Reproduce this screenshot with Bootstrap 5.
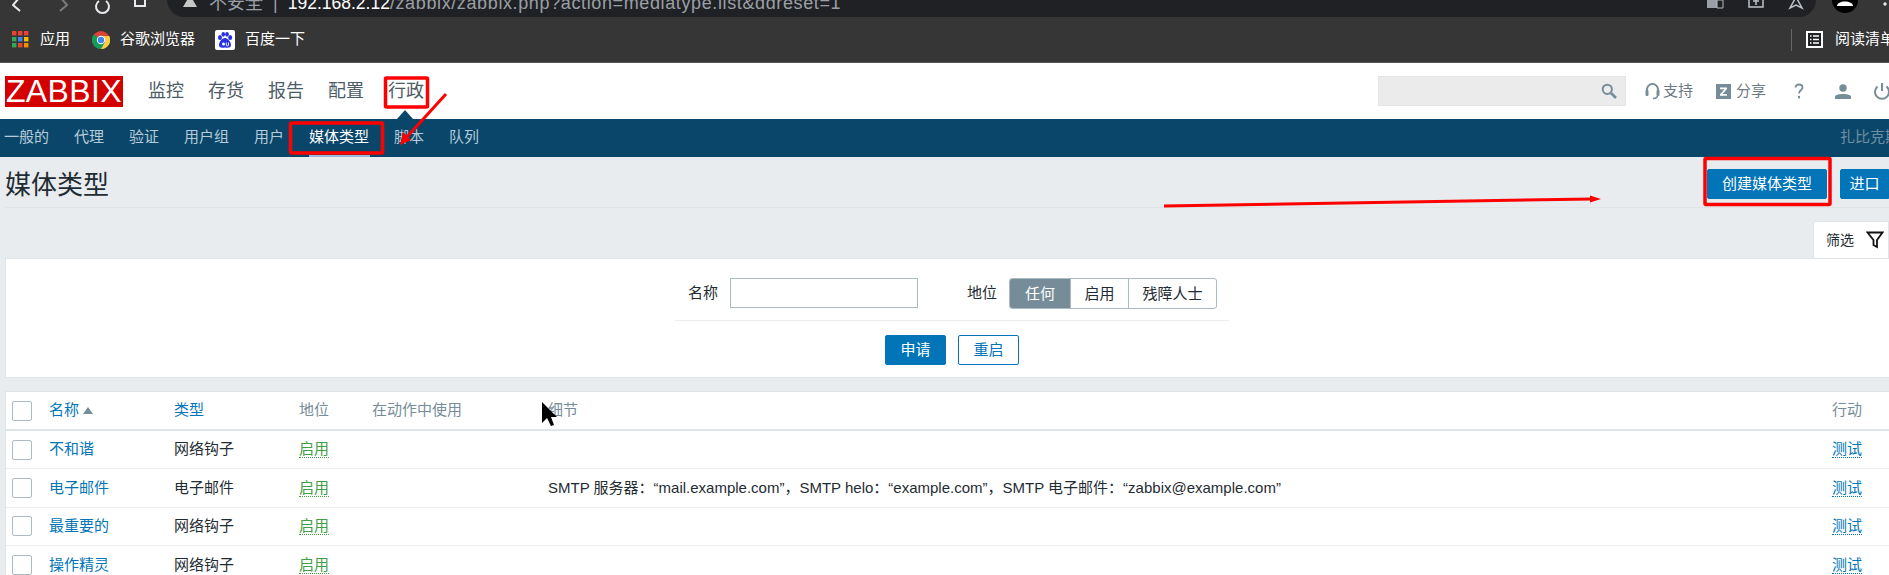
<!DOCTYPE html>
<html lang="zh">
<head>
<meta charset="utf-8">
<title>媒体类型</title>
<link href="https://cdn.jsdelivr.net/npm/bootstrap@5.3.0/dist/css/bootstrap.min.css" rel="stylesheet">
<style>
html,body{margin:0;background:#e9ecef;overflow:hidden}
body{width:1889px;height:575px;position:relative;font-family:"Liberation Sans","Noto Sans CJK SC",sans-serif;font-size:15px;color:#1f2c33}
a{text-decoration:none}
.fx0{flex:none}
.chrome-top{height:17px;background:#363636;overflow:hidden}
.chrome-btns{width:167px;flex:none;padding-left:12px}
.chrome-btns svg{display:block;flex:none}
.addr{width:1649px;flex:none;height:17px;background:#202124;border-radius:0 0 17px 17px;padding-left:16px;overflow:hidden;color:#9aa0a6;font-size:18px;line-height:6px;white-space:nowrap}
.addr b{font-weight:400;color:#fff;font-size:17.5px;letter-spacing:0}
.addr-path{letter-spacing:.62px}
.addr-sep{margin:0 10px}
.addr-icons{margin-right:10px}
.chrome-right{flex:1}
.bookmarks{height:46px;background:#363636;color:#fff;font-size:15px;padding-left:12px;border-bottom:1px solid #555}
.ic-apps{margin-right:11px}
.ic-chrome,.ic-baidu{margin-right:10px}
.bm-a{margin-right:22px}
.bm-b,.bm-c{margin-right:20px}
.readlist{margin-left:auto;border-left:1px solid #666;height:22px;padding-left:14px;white-space:nowrap;width:98px;overflow:hidden}
.ic-read{margin-right:12px}
.zb-head{height:56px;background:#fff;padding-left:5px}
.zb-logo{width:118px;height:31px;background:#d40000;color:#fff;font-size:32px;line-height:31px;text-align:center;letter-spacing:.4px;margin-right:13px}
.zb-menu a{color:#4c5c66;font-size:18px;padding:0 12px;display:block}
.zb-search{width:248px;height:30px;background:#ebebeb;border:1px solid #e3e5e6;margin-left:auto}
.zb-tool{color:#6b7a83;font-size:15px;margin-left:19px;width:244px;overflow:hidden;white-space:nowrap}
.zb-tool span{flex:none}
.t-support{margin-left:3px}
.t-z{margin-left:23px}
.t-share{margin-left:5px}
.t-help{margin-left:28px}
.t-user{margin-left:31px}
.t-power{margin-left:22px}
.sub{height:38px;background:#0a466a;color:#a7c0cf;padding-left:4px;white-space:nowrap}
.sub a{color:#b5cbd8;padding:0 12.5px;line-height:36px;display:block;position:relative}
.sub a:first-child{padding-left:0}
.sub a.on{color:#fff}
.sub a.on::after{content:"";position:absolute;left:12px;right:12px;bottom:0;height:2px;background:#9ab6d8}
.sub-right{margin-left:auto;color:#6e8ea1;width:49px;overflow:hidden;line-height:36px;white-space:nowrap}
.page-head{height:51px;margin-left:5px;padding-top:4px;border-bottom:1px solid #dfe4e7}
.page-title{font-size:26px;line-height:1;font-weight:400;margin:2px 0 0;color:#1f2c33}
.zb-btn{background:#0275b8;border:1px solid #0275b8;color:#fff;font-size:15px;height:30px;line-height:28px;padding:0;border-radius:2px;text-align:center}
.btn-create{width:120px;margin-right:13px}
.btn-import{width:49px;border-radius:2px 0 0 2px}
.tab-row{height:50px;padding-top:13px}
.ftab{width:76px;height:37px;background:#fff;border:1px solid #dfe4e7;border-bottom:0;margin-left:auto;padding-left:12px;font-size:14px;gap:12px}
.fbox{height:120px;margin-left:5px;background:#fff;border:1px solid #dfe4e7;border-right:0}
.frow{height:62px;padding-top:19px;width:554px;margin-left:669px;border-bottom:1px solid #ebeef0;padding-left:13px}
.ftxt{width:30px;margin-right:12px;line-height:30px}
.finput{width:188px;height:30px;border:1px solid #acbbc2;margin-right:49px;background:#fff}
.seg{height:31px;border:1px solid #acbbc2;border-radius:3px;overflow:hidden}
.seg span{display:block;text-align:center;line-height:29px;border-left:1px solid #acbbc2}
.seg span:first-child{border-left:0;background:#768d99;color:#fff;width:60px}
.seg .s2{width:58px}.seg .s3{width:88px}
.fbtns{padding-top:14px;gap:12px;width:554px;margin-left:669px}
.btn-ghost{width:61px;height:30px;border:1px solid #0275b8;background:#fff;color:#0275b8;border-radius:2px;line-height:28px;text-align:center;padding:0}
.btn-apply{width:61px}
.tbl-wrap{margin:13px 0 0 5px;background:#fff;border:1px solid #dfe4e7;border-right:0;border-bottom:0}
.ztable{table-layout:fixed;width:1884px;margin:0;border-collapse:collapse;--bs-table-bg:transparent;font-size:15px;color:#1f2c33}
.ztable col:nth-child(1){width:43px}
.ztable col:nth-child(2),.ztable col:nth-child(3){width:125px}
.ztable col:nth-child(4){width:73px}
.ztable col:nth-child(5){width:176px}
.ztable col:nth-child(6){width:1284px}
.ztable col:nth-child(7){width:58px}
.ztable th,.ztable td{padding:0;vertical-align:middle;font-weight:400;border-bottom:1px solid #ebeef0;height:38.5px;white-space:nowrap;overflow:hidden;box-shadow:none;color:inherit}
.ztable thead th{height:38px;border-bottom:2px solid #dfe4e7;color:#768d99}
.ztable a{color:#0275b8}
.cb{width:20px;height:20px;border:1px solid #acbbc2;border-radius:2px;background:#fff;display:block;margin-left:6px}
.ok{color:#429e47;border-bottom:1px dotted #429e47}
.ztable td a.act{color:#0275b8;border-bottom:1px dotted #0275b8}
.sort{display:inline-block;width:0;height:0;border:5px solid transparent;border-top:0;border-bottom:7px solid #768d99;margin-left:4px;vertical-align:1px}
.marks{position:absolute;left:0;top:0;pointer-events:none}
.caret-up{position:absolute;left:397px;top:110px;width:0;height:0;border:8px solid transparent;border-top:0;border-bottom:9px solid #0a466a}
</style>
</head>
<body>
<div class="chrome-top d-flex">
  <div class="chrome-btns d-flex">
    <svg width="155" height="17" viewBox="0 0 155 17" fill="none">
      <path d="M7 -2 L1 5 L8 11" stroke="#e8eaed" stroke-width="2"/>
      <path d="M49 -2 L55 5 L48 11" stroke="#7a7c7f" stroke-width="2"/>
      <path d="M87 1 A6.5 6.5 0 1 0 94 1" stroke="#e8eaed" stroke-width="2"/>
      <path d="M123 -3 V6 H133 V-3" stroke="#e8eaed" stroke-width="2"/>
    </svg>
  </div>
  <div class="addr d-flex align-items-start">
    <svg class="fx0" width="14" height="8" viewBox="0 0 14 8"><path d="M7 -5 L14 7 H0 Z" fill="#c4c7c5"/></svg>
    <span class="ms-2 ps-1">不安全</span><span class="addr-sep">|</span><span><b>192.168.2.12</b><span class="addr-path">/zabbix/zabbix.php?action=mediatype.list&amp;ddreset=1</span></span>
    <svg class="ms-auto addr-icons fx0" width="100" height="14" viewBox="0 0 100 14" fill="none">
      <path d="M1 -2 H16 V8 H1 Z" fill="#9aa0a6"/><path d="M11 0 H17 V8 H11 Z" stroke="#bbb" fill="#202124"/>
      <path d="M43 -2 V7 H57 V-2 M50 5 V0 M47 1 H53" stroke="#bdc1c6" stroke-width="1.5"/>
      <path d="M90 -3 L96 8 L90 5 L84 8 Z" stroke="#bdc1c6" stroke-width="1.5"/>
    </svg>
  </div>
  <div class="chrome-right">
    <svg width="73" height="17" viewBox="0 0 73 17" class="d-block"><circle cx="29" cy="0" r="13" fill="#000"/><path d="M21 6 C21 0 37 0 37 6 Z" fill="#fff"/><circle cx="69" cy="4" r="1.7" fill="#e8eaed"/></svg>
  </div>
</div>
<div class="bookmarks d-flex align-items-center">
  <svg width="17" height="17" viewBox="0 0 17 17" class="ic-apps fx0"><rect width="4.4" height="4.4" fill="#ea4335"/><rect x="6" width="4.4" height="4.4" fill="#ea4335"/><rect x="12" width="4.4" height="4.4" fill="#ea4335"/><rect y="6" width="4.4" height="4.4" fill="#34a853"/><rect x="6" y="6" width="4.4" height="4.4" fill="#4285f4"/><rect x="12" y="6" width="4.4" height="4.4" fill="#fbbc04"/><rect y="12" width="4.4" height="4.4" fill="#34a853"/><rect x="6" y="12" width="4.4" height="4.4" fill="#ea4335"/><rect x="12" y="12" width="4.4" height="4.4" fill="#fb8c00"/></svg>
  <span class="bm-a">应用</span>
  <svg width="18" height="18" viewBox="0 0 18 18" class="ic-chrome fx0"><circle cx="9" cy="9" r="9" fill="#db4437"/><path d="M9 9 L1.2 13.5 A9 9 0 0 1 2 3.3 Z" fill="#0f9d58"/><path d="M9 9 L17.8 6 A9 9 0 0 1 9 18 A9 9 0 0 1 1.2 13.5 Z" fill="#0f9d58"/><path d="M9 5 H17.2 A9 9 0 0 1 9 18 L13 11 Z" fill="#ffcd40"/><circle cx="9" cy="9" r="4.2" fill="#fff"/><circle cx="9" cy="9" r="3.2" fill="#4285f4"/></svg>
  <span class="bm-b">谷歌浏览器</span>
  <svg width="20" height="20" viewBox="0 0 20 20" class="ic-baidu fx0"><rect width="20" height="20" rx="2" fill="#fff"/><g fill="#2932e1"><ellipse cx="5" cy="7.5" rx="2" ry="2.6"/><ellipse cx="8.3" cy="4.3" rx="1.8" ry="2.4"/><ellipse cx="12" cy="4.3" rx="1.8" ry="2.4"/><ellipse cx="15.2" cy="7.5" rx="2" ry="2.6"/><path d="M10 8 C7 8 4 12 4 15 C4 18 7 18 10 17.5 C13 18 16 18 16 15 C16 12 13 8 10 8 Z"/></g><circle cx="8.5" cy="14" r="1.5" fill="#fff"/><path d="M11.3 12.5 V15 C11.3 16.3 13.5 16.3 13.5 15 V12.5" stroke="#fff" fill="none" stroke-width=".9"/></svg>
  <span class="bm-c">百度一下</span>
  <div class="readlist d-flex align-items-center">
    <svg width="17" height="17" viewBox="0 0 17 17" class="ic-read fx0"><rect x="1" y="1" width="15" height="15" fill="#202124" stroke="#fff" stroke-width="2"/><path d="M4 5 H5.5 M4 8.5 H5.5 M4 12 H5.5 M7 5 H13 M7 8.5 H13 M7 12 H13" stroke="#fff" stroke-width="1.5"/></svg>
    <span class="fx0">阅读清单</span>
  </div>
</div>

<header class="zb-head d-flex align-items-center">
  <div class="zb-logo">ZABBIX</div>
  <nav class="zb-menu d-flex">
    <a href="#">监控</a><a href="#">存货</a><a href="#">报告</a><a href="#">配置</a><a href="#">行政</a>
  </nav>
  <div class="zb-search d-flex align-items-center justify-content-end pe-2">
    <svg width="16" height="16" viewBox="0 0 16 16" fill="none"><circle cx="6.3" cy="6.3" r="4.6" stroke="#768d99" stroke-width="2"/><path d="M10 10 L15 15" stroke="#768d99" stroke-width="2.6"/></svg>
  </div>
  <div class="zb-tool d-flex align-items-center">
    <svg width="15" height="18" viewBox="0 0 15 18" fill="none" class="fx0"><path d="M2 11 V7.5 A5.5 5.5 0 0 1 13 7.5 V11" stroke="#768d99" stroke-width="2"/><rect x="0.5" y="8" width="3" height="6" rx="1" fill="#768d99"/><rect x="11.5" y="8" width="3" height="6" rx="1" fill="#768d99"/><path d="M12.5 14 C12 16 10 16.5 8 16.5" stroke="#768d99" stroke-width="1.5"/></svg>
    <span class="t-support">支持</span>
    <svg width="15" height="15" viewBox="0 0 15 15" class="t-z fx0"><rect width="15" height="15" fill="#768d99"/><path d="M4 3.5 H11 V5 L6.5 10 H11 V11.7 H4 V10.2 L8.5 5.2 H4 Z" fill="#fff"/></svg>
    <span class="t-share">分享</span>
    <svg width="10" height="16" viewBox="0 0 10 16" fill="none" class="t-help fx0"><path d="M1.5 4.5 C1.5 0.5 8.5 0.5 8.5 4.5 C8.5 7 5 7 5 10.5" stroke="#768d99" stroke-width="1.8"/><rect x="4" y="13" width="2" height="2.4" fill="#768d99"/></svg>
    <svg width="16" height="15" viewBox="0 0 16 15" class="t-user fx0"><circle cx="8" cy="4" r="3.7" fill="#768d99"/><path d="M0 15 V12.5 C0 9 16 9 16 12.5 V15 Z" fill="#768d99"/></svg>
    <svg width="20" height="17" viewBox="0 0 20 17" fill="none" class="t-power fx0"><path d="M4.5 3.5 A7 7 0 1 0 13.5 3.5" stroke="#768d99" stroke-width="2"/><path d="M9 0 V8" stroke="#768d99" stroke-width="2"/></svg>
  </div>
</header>
<nav class="sub d-flex">
  <a href="#">一般的</a><a href="#">代理</a><a href="#">验证</a><a href="#">用户组</a><a href="#">用户</a><a href="#" class="on">媒体类型</a><a href="#">脚本</a><a href="#">队列</a>
  <div class="sub-right"><span>扎比克斯</span></div>
</nav>
<span class="caret-up"></span>

<div class="page-head d-flex align-items-center">
  <h1 class="page-title">媒体类型</h1>
  <button class="zb-btn btn-create ms-auto" type="button">创建媒体类型</button>
  <button class="zb-btn btn-import" type="button">进口</button>
</div>
<div class="tab-row d-flex">
  <div class="ftab d-flex align-items-center">
    <span>筛选</span>
    <svg width="18" height="18" viewBox="0 0 18 18" fill="none" class="fx0"><path d="M1.5 1.5 H16.5 L11 9 V16 L7.5 14 V9 Z" stroke="#111" stroke-width="1.8"/></svg>
  </div>
</div>
<section class="fbox">
  <div class="frow d-flex">
    <span class="ftxt">名称</span>
    <span class="finput"></span>
    <span class="ftxt">地位</span>
    <div class="seg d-flex"><span>任何</span><span class="s2">启用</span><span class="s3">残障人士</span></div>
  </div>
  <div class="fbtns d-flex justify-content-center">
    <button class="zb-btn btn-apply" type="button">申请</button>
    <button class="btn-ghost" type="button">重启</button>
  </div>
</section>
<div class="tbl-wrap">
  <table class="table ztable">
    <colgroup><col><col><col><col><col><col><col></colgroup>
    <thead><tr><th><span class="cb"></span></th><th><a href="#">名称</a><i class="sort"></i></th><th><a href="#">类型</a></th><th>地位</th><th>在动作中使用</th><th>细节</th><th>行动</th></tr></thead>
    <tbody>
      <tr><td><span class="cb"></span></td><td><a href="#">不和谐</a></td><td>网络钩子</td><td><span class="ok">启用</span></td><td></td><td></td><td><a class="act" href="#">测试</a></td></tr>
      <tr><td><span class="cb"></span></td><td><a href="#">电子邮件</a></td><td>电子邮件</td><td><span class="ok">启用</span></td><td></td><td>SMTP 服务器：“mail.example.com”，SMTP helo：“example.com”，SMTP 电子邮件：“zabbix@example.com”</td><td><a class="act" href="#">测试</a></td></tr>
      <tr><td><span class="cb"></span></td><td><a href="#">最重要的</a></td><td>网络钩子</td><td><span class="ok">启用</span></td><td></td><td></td><td><a class="act" href="#">测试</a></td></tr>
      <tr><td><span class="cb"></span></td><td><a href="#">操作精灵</a></td><td>网络钩子</td><td><span class="ok">启用</span></td><td></td><td></td><td><a class="act" href="#">测试</a></td></tr>
    </tbody>
  </table>
</div>

<svg class="marks" width="1889" height="575" viewBox="0 0 1889 575" fill="none">
  <rect x="385.5" y="78" width="42" height="29" rx="1" stroke="#f00" stroke-width="3.5"/>
  <rect x="290.5" y="123" width="92" height="30" rx="1" stroke="#f00" stroke-width="3.5"/>
  <rect x="1705" y="158.5" width="125" height="46" rx="1" stroke="#f00" stroke-width="3.5"/>
  <path d="M446 94 L406 138" stroke="#f00" stroke-width="3"/>
  <path d="M400 145 L403 132 L411 140 Z" fill="#f00"/>
  <path d="M1164 206 L1592 199" stroke="#f00" stroke-width="3"/>
  <path d="M1601 199 L1590 195.5 V202.5 Z" fill="#f00"/>
  <path d="M542 402 V423 L547 418 L551 426 L554 425 L551 417 L557 417 Z" fill="#000"/>
</svg>
</body>
</html>
